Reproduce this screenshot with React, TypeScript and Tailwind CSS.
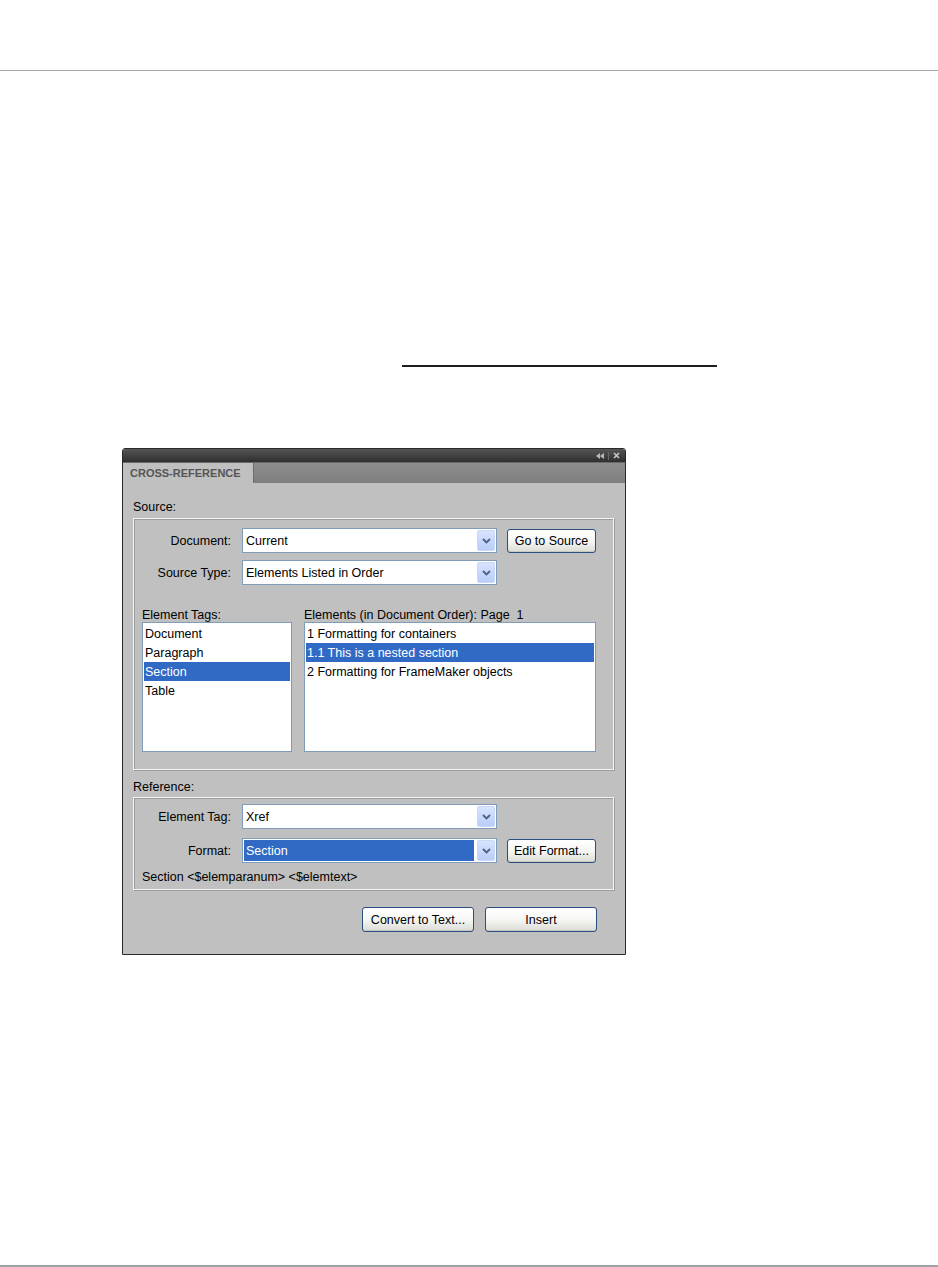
import React from "react";

const font = { fontFamily: '"Liberation Sans", Arial, sans-serif' };

function Chevron() {
    return (
        <svg width="9" height="6" viewBox="0 0 9 6">
            <path d="M1 1 L4.5 4.5 L8 1" stroke="#4d6185" strokeWidth="1.8" fill="none" />
        </svg>
    );
}

function Select({ value, width = "w-[255px]", selected = false }: { value: string; width?: string; selected?: boolean }) {
    return (
        <div className={`${width} h-[25px] bg-white border border-[#7f9db9] flex items-stretch p-px`}>
            <div className={`flex-1 flex items-center pl-[2px] pt-[2px] text-[12.5px] ${selected ? "bg-[#316ac5] text-white mr-[3px]" : "text-black"}`}>
                {value}
            </div>
            <div className="w-[18px] rounded-[2px] bg-gradient-to-b from-[#d8e4fd] to-[#b8cdf9] border border-[#c9d8fb] flex items-center justify-center">
                <Chevron />
            </div>
        </div>
    );
}

function Button({ label, width = "w-[89px]" }: { label: string; width?: string }) {
    return (
        <button className={`${width} h-[24px] rounded-[3px] border border-[#2c4f80] bg-gradient-to-b from-white via-[#f6f6f4] to-[#dcdcd6] text-[12.5px] text-black flex items-center justify-center pt-px shadow-[inset_0_-1px_0_#c8c8c0]`}>
            {label}
        </button>
    );
}

function Row({ label, children }: { label: string; children: React.ReactNode }) {
    return (
        <div className="flex items-center">
            <div className="w-[97px] text-right text-[12.5px] text-black pt-[2px]">{label}</div>
            <div className="ml-[11px] flex items-center gap-[10px]">{children}</div>
        </div>
    );
}

function ListBox({ items, selected, width }: { items: string[]; selected: number; width: string }) {
    return (
        <div className={`${width} h-[130px] bg-white border border-[#7f9db9] pt-px px-px`}>
            {items.map((it, i) => (
                <div
                    key={it}
                    className={`h-[19px] flex items-center pl-px pt-[2px] text-[12.5px] ${i === selected ? "bg-[#316ac5] text-white" : "text-black"}`}
                >
                    {it}
                </div>
            ))}
        </div>
    );
}

function GroupBox({ children, className = "" }: { children: React.ReactNode; className?: string }) {
    return (
        <div className={`w-[481px] border border-[#f4f4f4] shadow-[inset_1px_1px_0_#9c9c9c,1px_1px_0_#9c9c9c] ${className}`}>
            {children}
        </div>
    );
}

function CrossRefDialog() {
    return (
        <div className="ml-[122px] w-[504px] h-[507px] flex flex-col border border-[#2a2a2a] rounded-t-[3px] overflow-hidden" style={font}>
            {/* title strip */}
            <div className="h-[13px] bg-gradient-to-b from-[#555] to-[#2f2f2f] flex items-center justify-end pr-[5px] gap-[4px]">
                <svg width="8" height="6" viewBox="0 0 8 6">
                    <path d="M4 0 L0 3 L4 6 Z M8 0 L4 3 L8 6 Z" fill="#b8b8b8" />
                </svg>
                <div className="w-px h-[8px] bg-[#6a6a6a]" />
                <svg width="7" height="7" viewBox="0 0 7 7">
                    <path d="M1 1 L6 6 M6 1 L1 6" stroke="#c8c8c8" strokeWidth="1.6" />
                </svg>
            </div>
            {/* tab row */}
            <div className="h-[21px] bg-gradient-to-b from-[#8e8e8e] to-[#7e7e7e] flex border-t border-[#6a6a6a]">
                <div className="w-[131px] bg-[#c0c0c0] border-r border-[#6e6e6e] flex items-center pl-[7px] text-[11px] font-bold text-[#555]">
                    CROSS-REFERENCE
                </div>
            </div>
            {/* body */}
            <div className="flex-1 bg-[#c0c0c0] px-[10px] pt-[17px]">
                <div className="h-[14px] flex items-center text-[12.5px] text-black">Source:</div>
                <GroupBox className="mt-[4px] h-[252px] pt-[9px]">
                    <div className="flex flex-col gap-[7px]">
                        <Row label="Document:">
                            <Select value="Current" />
                            <Button label="Go to Source" />
                        </Row>
                        <Row label="Source Type:">
                            <Select value="Elements Listed in Order" />
                        </Row>
                    </div>
                    <div className="mt-[21px] pl-[8px] flex gap-[12px]">
                        <div className="flex flex-col">
                            <div className="h-[16px] flex items-center pt-[2px] text-[12.5px] text-black">Element Tags:</div>
                            <ListBox width="w-[150px]" items={["Document", "Paragraph", "Section", "Table"]} selected={2} />
                        </div>
                        <div className="flex flex-col">
                            <div className="h-[16px] flex items-center pt-[2px] text-[12.5px] text-black whitespace-pre">Elements (in Document Order): Page  1</div>
                            <ListBox
                                width="w-[292px]"
                                items={["1 Formatting for containers", "1.1 This is a nested section", "2 Formatting for FrameMaker objects"]}
                                selected={1}
                            />
                        </div>
                    </div>
                </GroupBox>
                <div className="mt-[10px] h-[14px] flex items-center pt-px text-[12.5px] text-black">Reference:</div>
                <GroupBox className="mt-[3px] h-[93px] pt-[6px]">
                    <div className="flex flex-col gap-[9px]">
                        <Row label="Element Tag:">
                            <Select value="Xref" />
                        </Row>
                        <Row label="Format:">
                            <Select value="Section" selected />
                            <Button label="Edit Format..." />
                        </Row>
                    </div>
                    <div className="mt-[6px] pl-[8px] h-[16px] flex items-center pt-px text-[12.5px] text-black">
                        Section &lt;$elemparanum&gt; &lt;$elemtext&gt;
                    </div>
                </GroupBox>
                <div className="mt-[17px] flex justify-end gap-[11px] pr-[18px]">
                    <Button label="Convert to Text..." width="w-[112px] h-[25px]" />
                    <Button label="Insert" width="w-[112px] h-[25px]" />
                </div>
            </div>
        </div>
    );
}

export default function App() {
    return (
        <div className="w-[938px] h-[1267px] bg-white flex flex-col">
            <div className="h-[70px]" />
            <div className="h-px bg-[#a6a6ae]" />
            <div className="h-[294px]" />
            <div className="ml-[402px] w-[315px] h-[2px] bg-[#1e1e1e]" />
            <div className="h-[81px]" />
            <CrossRefDialog />
            <div className="flex-1" />
            <div className="h-[2px] bg-[#a0a0a8]" />
        </div>
    );
}
